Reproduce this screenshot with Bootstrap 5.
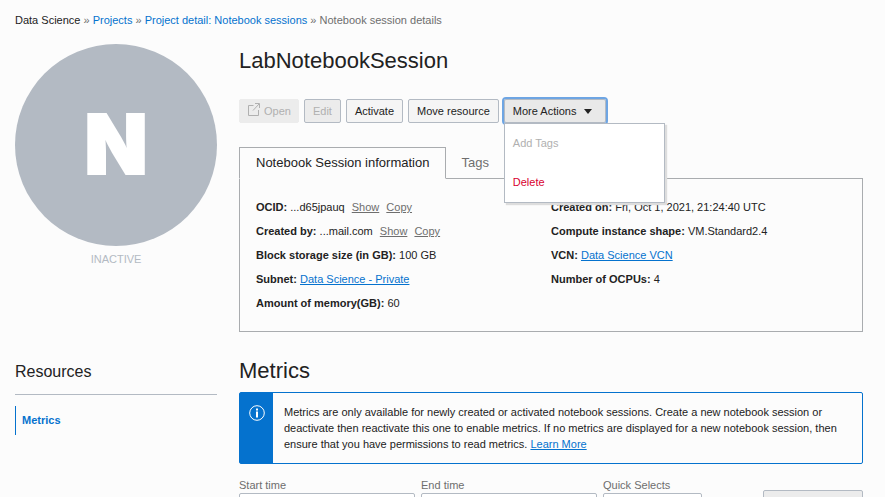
<!DOCTYPE html>
<html lang="en">
<head>
<meta charset="utf-8">
<meta name="viewport" content="width=device-width, initial-scale=1">
<title>LabNotebookSession</title>
<link href="https://cdn.jsdelivr.net/npm/bootstrap@5.3.0/dist/css/bootstrap.min.css" rel="stylesheet">
<style>
  :root { --ink: #222; --brand: #0572ce; --line: #b3bac3; --frame: #a9acaf; --muted: #6e6e6e; --off: #b0b0b0; }
  body { font: 11px/16px "Liberation Sans", Arial, sans-serif; color: var(--ink); background: #fcfcfc; }
  .page { height: 100vh; overflow: hidden; padding: 12px 22px 0 15px; }
  a { color: var(--brand); }
  .trail { margin-bottom: 16px; color: var(--muted); }
  .trail .service { color: var(--ink); }
  .layout { gap: 22px; }
  .side { flex: 0 0 202px; }
  .status-disc { width: 202px; height: 202px; background: var(--line); color: #fff; font: 900 82px/84px Inter, "Open Sans", sans-serif; -webkit-text-stroke: 2px #fff; }
  .status-text { color: var(--line); margin-top: 5px; }
  .side-title { font-size: 16px; line-height: 20px; margin: 95px 0 0; padding-bottom: 12px; border-bottom: 1px solid var(--line); font-weight: 400; }
  .side-link { display: block; margin-top: 11px; padding: 6px; line-height: 17px; border-left: 1px solid var(--brand); font-weight: 700; text-decoration: none; }
  .page-title { font-size: 22px; line-height: 34px; font-weight: 400; margin: 0 0 21px; }
  .actions { gap: 5px; }
  .act { --bs-btn-font-size: 11px; --bs-btn-line-height: 16px; --bs-btn-padding-x: 8px; --bs-btn-padding-y: 3px;
    --bs-btn-border-radius: 2px; --bs-btn-border-color: var(--line); --bs-btn-bg: #f5f5f5; --bs-btn-color: var(--ink);
    --bs-btn-disabled-bg: #ececec; --bs-btn-disabled-color: var(--off); --bs-btn-disabled-border-color: var(--line); --bs-btn-disabled-opacity: 1;
    --bs-btn-active-bg: #e9e9e9; --bs-btn-active-color: var(--ink); --bs-btn-active-border-color: var(--line); white-space: nowrap; }
  .act-open { --bs-btn-disabled-border-color: #ececec; --bs-btn-padding-x: 7px; }
  .act-more, .act-more:focus-visible { outline: 2px solid #6ea5e3; border-radius: 2px; box-shadow: none; }
  .act-more svg { margin: 0 5px 0 8px; }
  .actions-menu { top: 100%; left: 0; width: 161px; --bs-dropdown-min-width: 161px; --bs-dropdown-font-size: 11px; --bs-dropdown-padding-y: 0;
    --bs-dropdown-border-radius: 0; --bs-dropdown-border-color: var(--line); box-shadow: 2px 2px 1px #ddd; }
  .actions-menu .dropdown-item { padding: 11px 8px; line-height: 17px; }
  .actions-menu .dropdown-item.disabled { color: var(--off); }
  .actions-menu .delete-item { color: #d9002f; }
  .info-tabs { margin-top: 24px; --bs-nav-tabs-border-color: var(--frame); --bs-nav-tabs-border-radius: 0; }
  .info-tabs .nav-link { font-size: 13px; line-height: 20px; padding: 5px 14px; color: var(--muted); }
  .info-tabs .nav-link.active { padding: 5px 16px; color: var(--ink); background: #fcfcfc; border-color: var(--frame) var(--frame) #fcfcfc; }
  .info-panel { border: 1px solid var(--frame); border-top: 0; padding: 16px; }
  .facts dt, .facts dd { display: inline; margin: 0; }
  .facts div { line-height: 24px; }
  .facts button { font-size: 11px; line-height: 16px; color: var(--muted); margin-left: 4px; vertical-align: baseline; }
  .section-title { font-size: 22px; line-height: 28px; font-weight: 400; margin: 25px 0 7px; }
  .notice { border: 1px solid var(--brand); border-radius: 2px; }
  .notice-mark { flex: 0 0 33px; background: var(--brand); padding-top: 11px; }
  .notice-copy { padding: 11px 24px 11px 11px; }
  .filters { margin-top: 13px; gap: 6px; }
  .filters label { display: block; color: var(--muted); }
  .filters .form-control, .filters .form-select { min-height: 28px; height: 28px; border: 1px solid var(--line); border-radius: 2px; font-size: 11px; background-color: #fff; }
  .field-time { flex: 0 1 176px; }
  .field-quick { flex: 0 1 99px; }
  .act-reset { width: 100px; margin-top: 13px; }
</style>
<script src="https://cdn.jsdelivr.net/npm/bootstrap@5.3.0/dist/js/bootstrap.bundle.min.js"></script>
</head>
<body>
<div class="page">
  <nav class="trail" aria-label="Breadcrumb"><span class="service">Data Science</span> » <a class="text-decoration-none" href="#">Projects</a> » <a class="text-decoration-none" href="#">Project detail: Notebook sessions</a> » <span>Notebook session details</span></nav>

  <div class="layout d-flex align-items-start">
    <aside class="side">
      <div class="status-disc rounded-circle d-flex align-items-center justify-content-center">N</div>
      <div class="status-text text-center">INACTIVE</div>
      <h2 class="side-title">Resources</h2>
      <a class="side-link" href="#metrics">Metrics</a>
    </aside>

    <main class="flex-grow-1">
      <h1 class="page-title">LabNotebookSession</h1>
      <div class="actions d-flex">
        <button class="btn act act-open d-flex" type="button" disabled>
          <svg class="me-1" width="13" height="13" viewBox="0 0 13 13" fill="none" stroke="#b0b0b0" aria-hidden="true"><path d="M6.500 2.500H1.500V12.500H11.500V7M6 7.500L12 1M8 .5H12.500V5"/></svg>Open</button>
        <button class="btn act" type="button" disabled>Edit</button>
        <button class="btn act" type="button">Activate</button>
        <button class="btn act" type="button">Move resource</button>
        <div class="dropdown">
          <button class="btn act act-more active" type="button" data-bs-toggle="dropdown" aria-expanded="true">More Actions<svg width="8" height="6" viewBox="0 0 8 6" aria-hidden="true"><path d="M0 0H8L4 5Z" fill="#222"/></svg></button>
          <ul class="dropdown-menu actions-menu show">
            <li><button class="dropdown-item disabled" type="button" disabled>Add Tags</button></li>
            <li><button class="dropdown-item delete-item" type="button">Delete</button></li>
          </ul>
        </div>
      </div>

      <ul class="nav nav-tabs info-tabs">
        <li class="nav-item"><button class="nav-link active" type="button">Notebook Session information</button></li>
        <li class="nav-item"><button class="nav-link" type="button">Tags</button></li>
      </ul>
      <section class="info-panel">
        <div class="row g-0">
          <dl class="facts col-6 mb-0">
            <div><dt>OCID:</dt> <dd>...d65jpauq <button class="btn btn-link p-0 border-0" type="button">Show</button> <button class="btn btn-link p-0 border-0" type="button">Copy</button></dd></div>
            <div><dt>Created by:</dt> <dd>...mail.com <button class="btn btn-link p-0 border-0" type="button">Show</button> <button class="btn btn-link p-0 border-0" type="button">Copy</button></dd></div>
            <div><dt>Block storage size (in GB):</dt> <dd>100 GB</dd></div>
            <div><dt>Subnet:</dt> <dd><a href="#">Data Science - Private</a></dd></div>
            <div><dt>Amount of memory(GB):</dt> <dd>60</dd></div>
          </dl>
          <dl class="facts col-6 mb-0">
            <div><dt>Created on:</dt> <dd>Fri, Oct 1, 2021, 21:24:40 UTC</dd></div>
            <div><dt>Compute instance shape:</dt> <dd>VM.Standard2.4</dd></div>
            <div><dt>VCN:</dt> <dd><a href="#">Data Science VCN</a></dd></div>
            <div><dt>Number of OCPUs:</dt> <dd>4</dd></div>
          </dl>
        </div>
      </section>

      <h2 class="section-title" id="metrics">Metrics</h2>
      <div class="notice d-flex">
        <div class="notice-mark text-center">
          <svg width="16" height="16" viewBox="0 0 16 16" aria-hidden="true"><circle cx="8" cy="8" r="7.300" fill="none" stroke="#fff"/><path d="M7 3.500H9V5.500H7ZM7 6.500H9V12.500H7Z" fill="#fff"/></svg>
        </div>
        <div class="notice-copy">Metrics are only available for newly created or activated notebook sessions. Create a new notebook session or deactivate then reactivate this one to enable metrics. If no metrics are displayed for a new notebook session, then ensure that you have permissions to read metrics. <a href="#">Learn More</a></div>
      </div>

      <form class="filters d-flex">
        <div class="field-time"><label for="start">Start time</label><input class="form-control" id="start" type="text"></div>
        <div class="field-time"><label for="end">End time</label><input class="form-control" id="end" type="text"></div>
        <div class="field-quick"><label for="quick">Quick Selects</label><select class="form-select" id="quick"><option></option></select></div>
        <button class="btn act act-reset ms-auto" type="button" aria-label="Reset charts" disabled></button>
      </form>
    </main>
  </div>
</div>
</body>
</html>
